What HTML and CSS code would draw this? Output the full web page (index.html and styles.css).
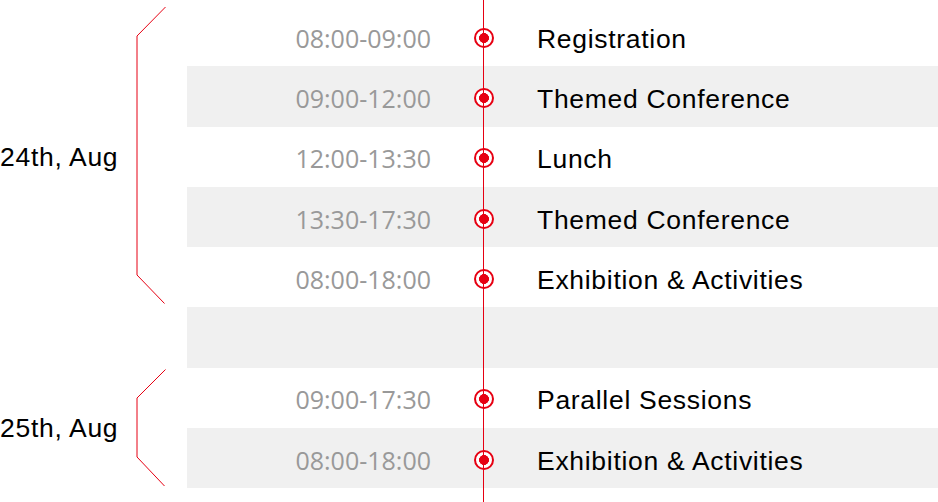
FILE: index.html
```html
<!DOCTYPE html>
<html lang="en">
<head>
  <meta charset="UTF-8" />
  <meta name="viewport" content="width=device-width, initial-scale=1.0"/>
  <title>Schedule</title>
  <link rel="stylesheet" href="styles.css">
</head>
<body>
  <div class="schedule">
    <section class="day">
      <div class="day-label">
        <span class="date">24th, Aug</span>
        <svg class="brace" width="30" height="301" viewBox="0 0 30 301">
          <polyline points="29.5,1 1,30 1,269 28.5,297.5" />
        </svg>
      </div>
      <div class="rows">
        <div class="row">
          <span class="time">08:00-09:00</span>
          <span class="dot"></span>
          <span class="event">Registration</span>
        </div>
        <div class="row alt">
          <span class="time">09:00-12:00</span>
          <span class="dot"></span>
          <span class="event">Themed Conference</span>
        </div>
        <div class="row">
          <span class="time">12:00-13:30</span>
          <span class="dot"></span>
          <span class="event">Lunch</span>
        </div>
        <div class="row alt">
          <span class="time">13:30-17:30</span>
          <span class="dot"></span>
          <span class="event">Themed Conference</span>
        </div>
        <div class="row">
          <span class="time">08:00-18:00</span>
          <span class="dot"></span>
          <span class="event">Exhibition &amp; Activities</span>
        </div>
      </div>
    </section>

    <section class="day">
      <div class="day-label"></div>
      <div class="rows">
        <div class="row alt"></div>
      </div>
    </section>

    <section class="day">
      <div class="day-label">
        <span class="date">25th, Aug</span>
        <svg class="brace" width="30" height="121" viewBox="0 0 30 121">
          <polyline points="29.5,1.5 1,30 1,89 28.5,118" />
        </svg>
      </div>
      <div class="rows">
        <div class="row">
          <span class="time">09:00-17:30</span>
          <span class="dot"></span>
          <span class="event">Parallel Sessions</span>
        </div>
        <div class="row alt">
          <span class="time">08:00-18:00</span>
          <span class="dot"></span>
          <span class="event">Exhibition &amp; Activities</span>
        </div>
      </div>
    </section>
  </div>
</body>
</html>
```

FILE: styles.css
```css
body {
  margin: 0;
  padding: 0;
  background: #fff;
  font-family: 'Liberation Sans', Arial, sans-serif;
  color: #000;
}

.schedule {
  position: relative;
  height: 502px;
  padding-top: 6px;
  box-sizing: border-box;
  overflow: hidden;
}

/* the red axis runs over every row */
.schedule::before {
  content: '';
  position: absolute;
  left: 483px;
  top: 0;
  bottom: 0;
  width: 1px;
  background: #e60012;
  z-index: 1;
}

.day {
  display: flex;
}

.day-label {
  width: 187px;
  flex-shrink: 0;
  display: flex;
  align-items: center;
}

.date {
  width: 136px;
  font-size: 26.5px;
  letter-spacing: 0.7px;
  padding-top: 1px;
}

.brace {
  display: block;
}

.brace polyline {
  fill: none;
  stroke: #e60012;
  stroke-width: 1;
}

.rows {
  flex: 1;
}

.row {
  display: grid;
  grid-template-columns: 244px 105px 1fr;
  align-items: center;
  height: 60.3px;
  padding-top: 4px;
  box-sizing: border-box;
}

.row.alt {
  background: #f0f0f0;
}

.time {
  text-align: right;
  font-family: 'Open Sans', sans-serif;
  font-size: 25px;
  color: #999;
  margin-top: -1px;
}

.dot {
  justify-self: center;
  width: 20px;
  height: 20px;
  box-sizing: border-box;
  border: 2px solid #e60012;
  border-radius: 50%;
  background: radial-gradient(circle, #e60012 0 4.7px, #fff 5.2px);
  margin-top: -1px;
}

.event {
  padding-left: 1px;
  margin-top: 2px;
  font-size: 26.5px;
  letter-spacing: 0.7px;
}
```
